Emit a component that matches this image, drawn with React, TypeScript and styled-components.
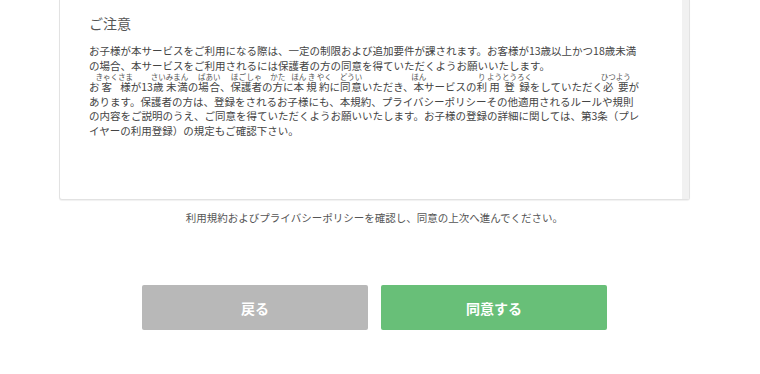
import React from 'react'
import styled, { createGlobalStyle } from 'styled-components'

const GlobalStyle = createGlobalStyle`
  html, body {
    margin: 0;
    padding: 0;
    background: #fff;
  }
  body {
    font-family: "Noto Sans CJK JP", "Noto Sans", sans-serif;
    color: #444;
  }
`

const Column = styled.div`
  width: 631px;
  margin-left: 59px;
  display: flex;
  flex-direction: column;
  align-items: center;
`

const Box = styled.div`
  width: 100%;
  height: 200px;
  box-sizing: border-box;
  display: flex;
  background: #fff;
  border: 1px solid #e2e2e2;
  border-top: 0;
  border-radius: 0 0 3px 3px;
  box-shadow: 0 1px 1px rgba(0, 0, 0, 0.06);
`

const Content = styled.div`
  flex: 1;
  padding: 13px 40px 0 29px;
`

const Track = styled.div`
  width: 7px;
  background: #f1f1f1;
`

const Title = styled.h3`
  margin: 0 0 11px;
  font-size: 14px;
  font-weight: 400;
  line-height: 20px;
  color: #555;
`

const Paragraph = styled.p`
  margin: 0;
  font-size: 10.5px;
  line-height: 14.6px;
  color: #444;

  rt {
    font-size: 7.5px;
    line-height: 1;
    color: #555;
  }
`

const Note = styled.p`
  margin: 10px 0 0;
  font-size: 10.5px;
  line-height: 15px;
  color: #555;
`

const Actions = styled.div`
  display: flex;
  gap: 13px;
  margin-top: 60px;
`

const Button = styled.button<{ $primary?: boolean }>`
  width: 226px;
  height: 45px;
  border: 0;
  border-radius: 2px;
  background: ${(p) => (p.$primary ? '#68bf78' : '#b8b8b8')};
  color: #fff;
  font-family: "Noto Sans CJK JP", "Noto Sans", sans-serif;
  font-size: 14px;
  font-weight: 700;
  cursor: pointer;
`

const R = ({ b, t }: { b: string; t: string }) => (
  <ruby>
    {b}
    <rt>{t}</rt>
  </ruby>
)

export default function App() {
  return (
    <>
      <GlobalStyle />
      <Column>
        <Box>
          <Content>
            <Title>ご注意</Title>
            <Paragraph>
              お子様が本サービスをご利用になる際は、一定の制限および追加要件が課されます。お客様が13歳以上かつ18歳未満の場合、本サービスをご利用されるには保護者の方の同意を得ていただくようお願いいたします。
            </Paragraph>
            <Paragraph>
              お<R b="客" t="きゃく" /><R b="様" t="さま" />が13<R b="歳" t="さい" /><R b="未満" t="みまん" />の<R b="場合" t="ばあい" />、<R b="保護者" t="ほごしゃ" />の<R b="方" t="かた" />に<R b="本" t="ほん" /><R b="規" t="き" /><R b="約" t="やく" />に<R b="同意" t="どうい" />いただき、<R b="本" t="ほん" />サービスの<R b="利" t="り" /><R b="用" t="よう" /><R b="登" t="とう" /><R b="録" t="ろく" />をしていただく<R b="必" t="ひつ" /><R b="要" t="よう" />があります。保護者の方は、登録をされるお子様にも、本規約、プライバシーポリシーその他適用されるルールや規則の内容をご説明のうえ、ご同意を得ていただくようお願いいたします。お子様の登録の詳細に関しては、第3条（プレイヤーの利用登録）の規定もご確認下さい。
            </Paragraph>
          </Content>
          <Track />
        </Box>
        <Note>利用規約およびプライバシーポリシーを確認し、同意の上次へ進んでください。</Note>
        <Actions>
          <Button>戻る</Button>
          <Button $primary>同意する</Button>
        </Actions>
      </Column>
    </>
  )
}
